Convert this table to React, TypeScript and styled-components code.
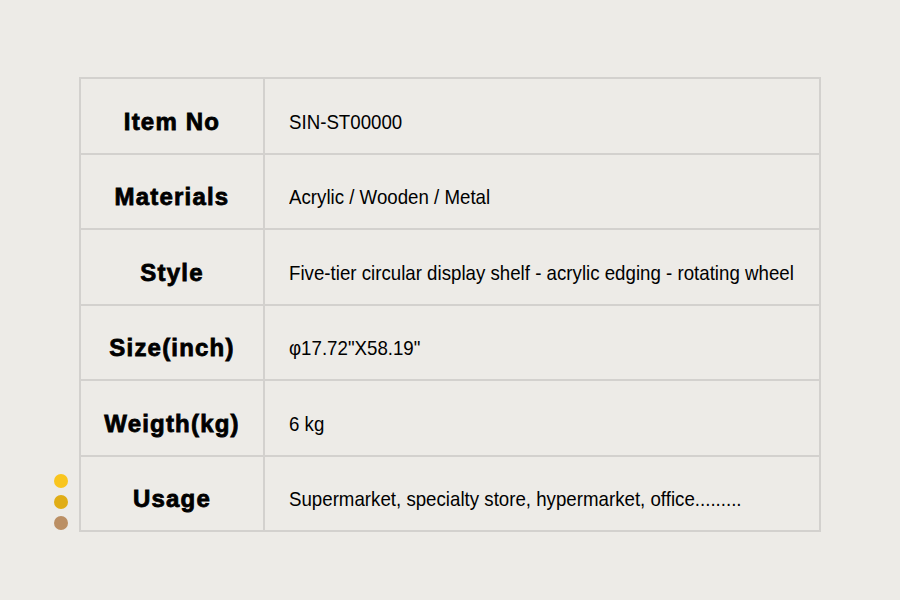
import { Fragment } from "react";
import styled, { createGlobalStyle } from "styled-components";

const GlobalStyle = createGlobalStyle`
  html, body {
    margin: 0;
    padding: 0;
    background: #edebe7;
  }
`;

const Page = styled.div`
  width: 900px;
  min-height: 600px;
  box-sizing: border-box;
  padding: 77px 79px 0 54px;
  display: flex;
  align-items: flex-start;
  background: #edebe7;
`;

const Dots = styled.div`
  flex: 0 0 25px;
  align-self: flex-end;
  display: flex;
  flex-direction: column;
  gap: 7px;
  margin-bottom: 70px;
`;

const Dot = styled.span<{ $color: string }>`
  display: block;
  width: 14px;
  height: 14px;
  border-radius: 50%;
  background: ${(p) => p.$color};
`;

const Table = styled.div`
  flex: 1;
  min-width: 0;
  display: grid;
  grid-template-columns: 184px minmax(0, 1fr);
  border-top: 2px solid #d3d1ce;
  border-left: 2px solid #d3d1ce;
`;

const Cell = styled.div<{ $label?: boolean }>`
  height: 75.5px;
  min-width: 0;
  box-sizing: border-box;
  border-right: 2px solid #d3d1ce;
  border-bottom: 2px solid #d3d1ce;
  display: flex;
  align-items: center;
  padding-top: 16px;
  padding-bottom: 4px;
  justify-content: ${(p) => (p.$label ? "center" : "flex-start")};
  padding-left: ${(p) => (p.$label ? "0" : "24px")};
  color: #000;
  font-family: "Liberation Sans", Arial, sans-serif;
  white-space: nowrap;
`;

const Label = styled.span`
  font-size: 24px;
  font-weight: 700;
  letter-spacing: 1.2px;
  -webkit-text-stroke: 0.8px #000;
`;

const Value = styled.span`
  display: inline-block;
  font-size: 21px;
  font-weight: 400;
  transform: scaleX(0.89);
  transform-origin: left center;
`;

const rows = [
  ["Item No", "SIN-ST00000"],
  ["Materials", "Acrylic / Wooden / Metal"],
  ["Style", "Five-tier circular display shelf - acrylic edging - rotating wheel"],
  ["Size(inch)", "φ17.72\"X58.19\""],
  ["Weigth(kg)", "6 kg"],
  ["Usage", "Supermarket, specialty store, hypermarket, office........."],
];

export default function App() {
  return (
    <>
      <GlobalStyle />
      <Page>
        <Dots>
          <Dot $color="#f9c51e" />
          <Dot $color="#e0ad16" />
          <Dot $color="#bb8f64" />
        </Dots>
        <Table>
          {rows.map(([label, value]) => (
            <Fragment key={label}>
              <Cell $label>
                <Label>{label}</Label>
              </Cell>
              <Cell>
                <Value>{value}</Value>
              </Cell>
            </Fragment>
          ))}
        </Table>
      </Page>
    </>
  );
}
